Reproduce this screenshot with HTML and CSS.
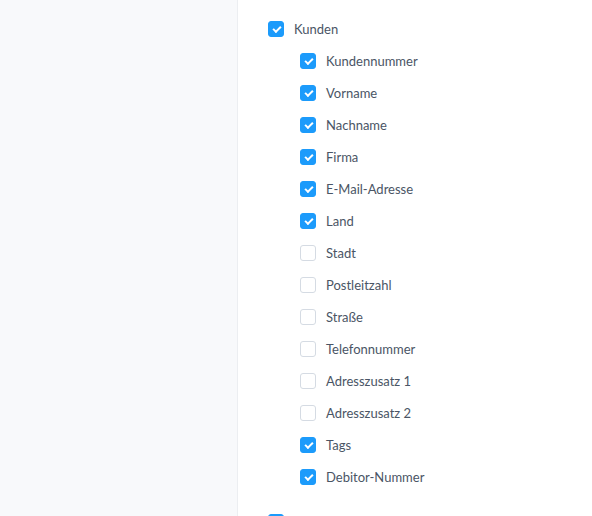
FILE: index.html
```html
<!DOCTYPE html>
<html lang="de">
<head>
  <meta charset="UTF-8">
  <title>Felder</title>
  <link rel="stylesheet" href="styles.css">
</head>
<body>
  <aside class="sidebar"></aside>
  <main class="content">
    <ul class="tree">
      <li class="group">
        <label class="row"><input type="checkbox" checked><span class="box"></span>Kunden</label>
        <ul class="fields">
          <li><label class="row"><input type="checkbox" checked><span class="box"></span>Kundennummer</label></li>
          <li><label class="row"><input type="checkbox" checked><span class="box"></span>Vorname</label></li>
          <li><label class="row"><input type="checkbox" checked><span class="box"></span>Nachname</label></li>
          <li><label class="row"><input type="checkbox" checked><span class="box"></span>Firma</label></li>
          <li><label class="row"><input type="checkbox" checked><span class="box"></span>E-Mail-Adresse</label></li>
          <li><label class="row"><input type="checkbox" checked><span class="box"></span>Land</label></li>
          <li><label class="row"><input type="checkbox"><span class="box"></span>Stadt</label></li>
          <li><label class="row"><input type="checkbox"><span class="box"></span>Postleitzahl</label></li>
          <li><label class="row"><input type="checkbox"><span class="box"></span>Straße</label></li>
          <li><label class="row"><input type="checkbox"><span class="box"></span>Telefonnummer</label></li>
          <li><label class="row"><input type="checkbox"><span class="box"></span>Adresszusatz 1</label></li>
          <li><label class="row"><input type="checkbox"><span class="box"></span>Adresszusatz 2</label></li>
          <li><label class="row"><input type="checkbox" checked><span class="box"></span>Tags</label></li>
          <li><label class="row"><input type="checkbox" checked><span class="box"></span>Debitor-Nummer</label></li>
        </ul>
      </li>
      <li class="group">
        <label class="row"><input type="checkbox" checked><span class="box"></span>Bestellungen</label>
      </li>
    </ul>
  </main>
</body>
</html>
```

FILE: styles.css
```css
*{
  padding: 0;
  margin: 0;
  box-sizing: border-box;
}
html, body{
  height: 100%;
  overflow: hidden;
}
body{
  display: flex;
  font-family: "Source Sans Pro", Lato, "Noto Sans", sans-serif;
  font-size: 13px;
  color: #4a5565;
  background: #fff;
}
.sidebar{
  width: 238px;
  flex-shrink: 0;
  background: #f8f9fb;
  border-right: 1px solid #eceef1;
}
.content{
  padding: 14px 0 0 30px;
}
ul{
  list-style: none;
}
.group + .group{
  margin-top: 14px;
}
.group > .row{
  height: 31px;
  align-items: flex-start;
  padding-top: 7px;
}
.fields{
  padding-left: 32px;
}
.row{
  display: flex;
  align-items: center;
  gap: 10px;
  height: 32px;
  cursor: pointer;
}
.row input{
  display: none;
}
.box{
  width: 16px;
  height: 16px;
  border: 1px solid #d5dbe3;
  border-radius: 3px;
  background: #fff;
  flex-shrink: 0;
  position: relative;
}
.row input:checked + .box{
  background: #1c9bfb;
  border-color: #1c9bfb;
}
.row input:checked + .box::after{
  content: "";
  position: absolute;
  left: 4px;
  top: 3.5px;
  width: 6px;
  height: 3px;
  border-left: 2px solid #fff;
  border-bottom: 2px solid #fff;
  transform: rotate(-45deg);
}
```
